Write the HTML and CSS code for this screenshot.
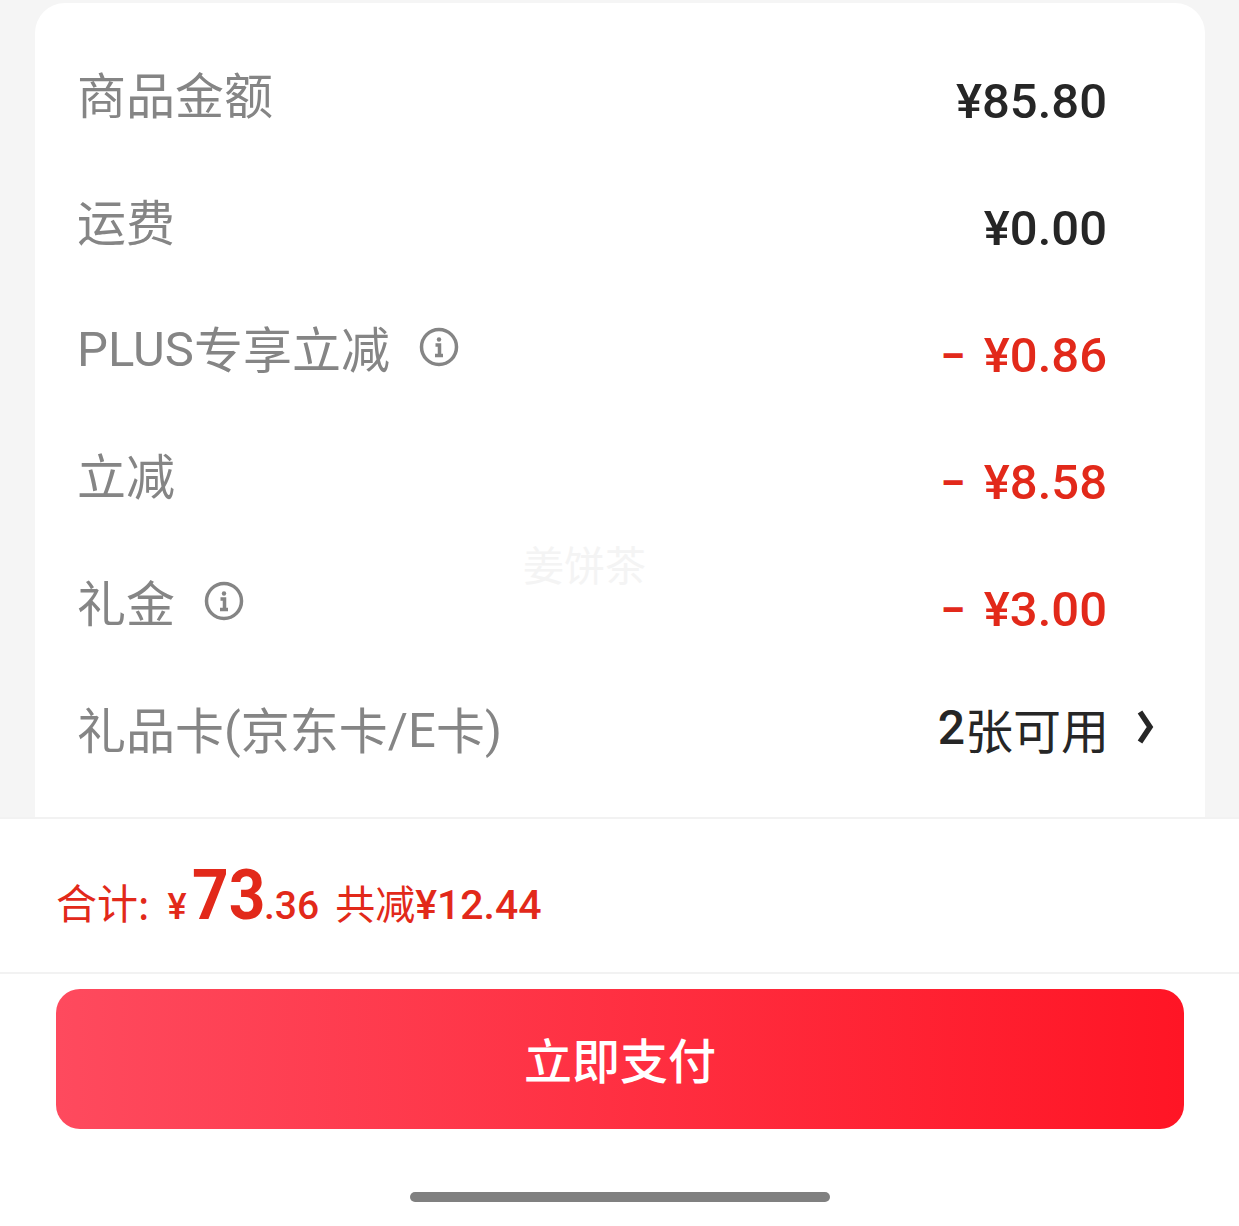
FILE: index.html
```html
<!DOCTYPE html>
<html lang="zh-CN">
<head>
  <meta charset="UTF-8">
  <meta name="viewport" content="width=device-width, initial-scale=1.0">
  <title>订单支付</title>
  <link rel="stylesheet" href="styles.css">
</head>
<body>
  <div class="page">
    <!-- Price details -->
    <div class="detail-area">
      <div class="card">
        <div class="row">
          <div class="label">商品金额</div>
          <div class="value">¥85.80</div>
        </div>
        <div class="row">
          <div class="label">运费</div>
          <div class="value">¥0.00</div>
        </div>
        <div class="row">
          <div class="label"><span class="latin">PLUS</span>专享立减
            <svg class="info" viewBox="0 0 40 40"><circle cx="20" cy="20" r="17.5"/><circle class="dot" cx="20" cy="12.5" r="2.2"/><path d="M16.5 18h4v10M16 28.5h8"/></svg>
          </div>
          <div class="value red"><span class="minus">–</span><span class="money">¥0.86</span></div>
        </div>
        <div class="row">
          <div class="label">立减</div>
          <div class="value red"><span class="minus">–</span><span class="money">¥8.58</span></div>
        </div>
        <div class="row">
          <div class="label">礼金
            <svg class="info" viewBox="0 0 40 40"><circle cx="20" cy="20" r="17.5"/><circle class="dot" cx="20" cy="12.5" r="2.2"/><path d="M16.5 18h4v10M16 28.5h8"/></svg>
          </div>
          <div class="value red"><span class="minus">–</span><span class="money">¥3.00</span></div>
        </div>
        <div class="row">
          <div class="label">礼品卡<span class="latin">(</span>京东卡<span class="latin">/E</span>卡<span class="latin">)</span></div>
          <div class="value cards"><b>2</b>张可用
            <svg class="arrow" viewBox="0 0 18 36"><path d="M4 3l10 15L4 33"/></svg>
          </div>
        </div>
        <div class="watermark">姜饼茶</div>
      </div>
    </div>

    <!-- Total -->
    <div class="total-bar">
      <span class="total-label">合计:</span>
      <span class="yen">¥</span><span class="big">73</span><span class="cents">.36</span>
      <span class="saved"><span class="saved-label">共减</span><b>¥12.44</b></span>
    </div>

    <!-- Pay button -->
    <div class="pay-area">
      <button class="pay-btn" type="button">立即支付</button>
      <div class="home-bar"></div>
    </div>
  </div>
</body>
</html>
```

FILE: styles.css
```css
body {
  margin: 0;
  padding: 0;
  background: #fff;
  font-family: "Noto Sans CJK SC", "Noto Sans", sans-serif;
}
.page {
  width: 1239px;
  height: 1226px;
  overflow: hidden;
}
.detail-area {
  height: 817px;
  padding: 3px 34px 0 35px;
  box-sizing: border-box;
  background: #f5f5f5;
}
.card {
  position: relative;
  height: 814px;
  padding: 31px 98px 0 42px;
  box-sizing: border-box;
  background: #fff;
  border-radius: 30px 30px 0 0;
}
.row {
  display: flex;
  justify-content: space-between;
  align-items: center;
  height: 127px;
}
.label {
  display: flex;
  align-items: center;
  padding-bottom: 10px;
  font-size: 49px;
  font-weight: 400;
  color: #858585;
  white-space: nowrap;
}
.latin {
  padding-top: 6px;
  font-family: Roboto, sans-serif;
  font-weight: 400;
}
.info {
  width: 40px;
  height: 40px;
  margin-left: 29px;
  fill: none;
  stroke: #858585;
  stroke-width: 3.5;
}
.info .dot {
  fill: #858585;
  stroke: none;
}
.value {
  padding-top: 8px;
  font-family: Roboto, "Noto Sans CJK SC", sans-serif;
  font-size: 49px;
  font-weight: 500;
  color: #262626;
  white-space: nowrap;
}
.red {
  color: #e2291a;
}
.minus {
  font-size: 37px;
  font-weight: 900;
  vertical-align: 4px;
}
.money {
  margin-left: 20px;
}
.cards {
  position: relative;
  display: flex;
  align-items: center;
  margin-right: -2px;
  padding-top: 0;
  padding-bottom: 10px;
  font-family: "Noto Sans CJK SC", sans-serif;
  font-size: 48px;
  font-weight: 400;
}
.cards b {
  font-family: Roboto, sans-serif;
  font-weight: 500;
}
.arrow {
  position: absolute;
  left: 198px;
  top: 16px;
  width: 18px;
  height: 36px;
  fill: none;
  stroke: #262626;
  stroke-width: 5.5;
}
.watermark {
  position: absolute;
  left: 488px;
  top: 530px;
  font-size: 41px;
  color: #f4f4f4;
}
.total-bar {
  display: flex;
  align-items: baseline;
  height: 157px;
  padding: 34px 0 0 56px;
  box-sizing: border-box;
  border-top: 2px solid #f2f2f2;
  border-bottom: 2px solid #f2f2f2;
  color: #e2291a;
  font-family: Roboto, "Noto Sans CJK SC", sans-serif;
}
.total-label {
  font-family: "Noto Sans CJK SC", sans-serif;
  font-size: 41px;
  font-weight: 400;
}
.yen {
  margin-left: 18px;
  font-size: 36px;
  font-weight: 500;
}
.big {
  margin: 0 -12px 0 5px;
  font-size: 71px;
  font-weight: 700;
  transform: scaleX(0.9);
  transform-origin: left;
}
.cents {
  margin-left: 3px;
  font-size: 39px;
  font-weight: 500;
}
.saved {
  margin-left: 16px;
  font-size: 41px;
  font-weight: 500;
}
.saved-label {
  font-family: "Noto Sans CJK SC", sans-serif;
  font-size: 40px;
  font-weight: 400;
}
.saved b {
  font-weight: 500;
}
.pay-area {
  padding: 15px 55px 0 56px;
}
.pay-btn {
  display: block;
  width: 100%;
  height: 140px;
  padding: 0 0 3px;
  border: 0;
  border-radius: 24px;
  background: linear-gradient(90deg, #fe4a5e, #ff1525);
  color: #fff;
  font-family: "Noto Sans CJK SC", sans-serif;
  font-size: 48px;
  font-weight: 500;
}
.home-bar {
  width: 420px;
  height: 10px;
  margin: 63px auto 0;
  border-radius: 5px;
  background: #808080;
}
```
